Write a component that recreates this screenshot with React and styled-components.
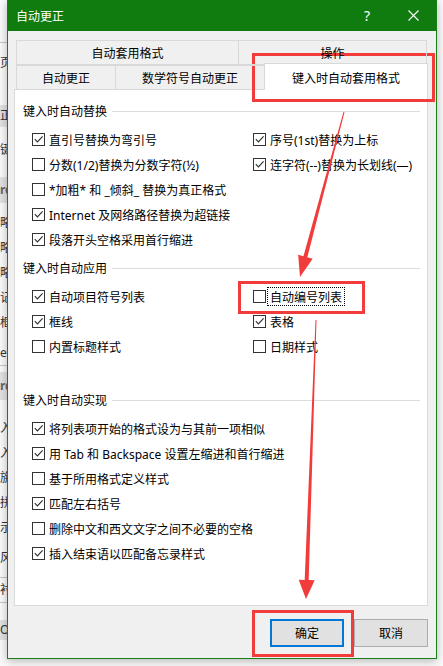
import React from "react";
import styled, { createGlobalStyle } from "styled-components";

const GlobalStyle = createGlobalStyle`
  html, body { margin: 0; padding: 0; }
  body {
    width: 443px; height: 666px; overflow: hidden; background: #fafafa;
    font-family: "Noto Sans", "Noto Sans CJK SC", sans-serif;
  }
  #root { width: 443px; height: 666px; }
`;

const Screen = styled.div`
  position: relative;
  width: 443px;
  height: 666px;
  overflow: hidden;
  background: #fafafa;
`;

const BgColumn = styled.div`
  display: flex;
  flex-direction: column;
  width: 60px;
  font-size: 12px;
  color: #333;
`;

const BgRow = styled.div`
  height: ${(p) => p.$h}px;
  display: flex;
  align-items: center;
  background: ${(p) => (p.$line ? "#c6c6c6" : p.$band ? "#e2e2e2" : "transparent")};
  font-weight: ${(p) => (p.$bold ? 700 : 400)};
  color: ${(p) => (p.$bold ? "#666" : "#333")};
  padding-left: ${(p) => (p.$bold ? 0 : 0)}px;
  white-space: nowrap;
  line-height: 1;
`;

const Dialog = styled.div`
  position: absolute;
  left: 7px;
  top: 0;
  width: 430px;
  height: 659px;
  box-sizing: border-box;
  border: 1px solid #1a7f1a;
  border-top: none;
  background: #f0f0f0;
  display: flex;
  flex-direction: column;
  box-shadow: 0 2px 9px rgba(0, 0, 0, 0.28);
`;

const TitleBar = styled.div`
  height: 31px;
  flex: none;
  background: #107c10;
  color: #fff;
  display: flex;
  align-items: center;
  padding-left: 8px;
  font-size: 12px;
`;

const Title = styled.div`
  flex: 1;
`;

const TitleButton = styled.div`
  width: 46px;
  height: 31px;
  display: flex;
  align-items: center;
  justify-content: center;
  font-size: 14px;
  font-family: "Noto Sans", sans-serif;
`;

const Body = styled.div`
  flex: 1;
  display: flex;
  flex-direction: column;
  padding: 9px 8px 0 6px;
`;

const TabStrip = styled.div`
  display: flex;
  flex-direction: column;
  margin-left: 2px;
  margin-bottom: -1px;
  position: relative;
  z-index: 1;
`;

const TabRow = styled.div`
  display: flex;
  align-items: flex-end;
  height: 25px;
`;

const Tab = styled.div`
  box-sizing: border-box;
  width: ${(p) => p.$w}px;
  height: ${(p) => (p.$selected ? 27 : 25)}px;
  margin-left: ${(p) => (p.$first ? 0 : -1)}px;
  border: 1px solid #d9d9d9;
  border-bottom: ${(p) => (p.$back ? "1px solid #d9d9d9" : "none")};
  background: ${(p) => (p.$selected ? "#fff" : "transparent")};
  display: flex;
  align-items: center;
  justify-content: center;
  font-size: 12px;
  color: #000;
  padding-top: ${(p) => (p.$selected ? 1 : 0)}px;
`;

const Panel = styled.div`
  box-sizing: border-box;
  height: 517px;
  background: #fff;
  border: 1px solid #d9d9d9;
  padding: 11px 7px 0 8px;
  display: flex;
  flex-direction: column;
`;

const Group = styled.div`
  display: flex;
  flex-direction: column;
  margin-bottom: ${(p) => p.$after || 0}px;
`;

const GroupHeader = styled.div`
  height: 20px;
  display: flex;
  align-items: center;
  font-size: 12px;
  color: #000;
  white-space: nowrap;
`;

const HeaderRule = styled.div`
  flex: 1;
  height: 1px;
  background: #dcdcdc;
  margin-left: 5px;
`;

const OptionGrid = styled.div`
  display: grid;
  grid-template-columns: ${(p) => (p.$single ? "1fr" : "221px 1fr")};
  grid-auto-rows: 25px;
  margin: 6px 0 0 9px;
`;

const Option = styled.div`
  grid-column: ${(p) => p.$col || "auto"};
  display: flex;
  align-items: center;
  gap: 1px;
  white-space: nowrap;
`;

const Box = styled.span`
  box-sizing: border-box;
  width: 13px;
  height: 13px;
  flex: none;
  border: 1px solid #333;
  background: #fff;
  display: flex;
`;

const Label = styled.span`
  box-sizing: border-box;
  height: 19px;
  display: flex;
  align-items: center;
  padding: 0 2px;
  border: 1px ${(p) => (p.$focused ? "dotted #000" : "solid transparent")};
  font-size: 12px;
  color: #000;
`;

const ButtonRow = styled.div`
  display: flex;
  justify-content: flex-end;
  gap: 10px;
  margin-top: 13px;
`;

const Button = styled.button`
  box-sizing: border-box;
  width: 74px;
  height: 28px;
  background: #e1e1e1;
  border: ${(p) => (p.$default ? "2px solid #0078d7" : "1px solid #adadad")};
  font-family: "Noto Sans", "Noto Sans CJK SC", sans-serif;
  font-size: 12px;
  color: #000;
  padding: 0;
  margin: 0;
`;

const RedFrame = styled.div`
  position: absolute;
  box-sizing: border-box;
  border: 3px solid #f23b3b;
  pointer-events: none;
`;

const ArrowLayer = styled.svg`
  position: absolute;
  left: 0;
  top: 0;
  pointer-events: none;
`;

function Check({ on }) {
  return (
    <Box>
      {on && (
        <svg width="11" height="11" viewBox="0 0 11 11">
          <path d="M1.8 5.2 L4.4 7.9 L9.6 2.4" fill="none" stroke="#2b2b2b" strokeWidth="1.1" />
        </svg>
      )}
    </Box>
  );
}

function Opt({ on, text, col, focused }) {
  return (
    <Option $col={col}>
      <Check on={on} />
      <Label $focused={focused}>{text}</Label>
    </Option>
  );
}

const bgRows = [
  { h: 42 }, { h: 1, line: true }, { h: 12 }, { h: 15, t: "页" }, { h: 35 },
  { h: 22, band: true, t: "正" }, { h: 16 }, { h: 14, t: "键" }, { h: 20 },
  { h: 26, band: true, t: "rd", bold: true }, { h: 7 },
  { h: 25, t: "略" }, { h: 25, t: "略" }, { h: 25, t: "略" }, { h: 25, t: "记" }, { h: 25, t: "框" },
  { h: 5 }, { h: 25, t: "e y" }, { h: 1, line: true }, { h: 6 },
  { h: 28, band: true, t: "rd", bold: true }, { h: 15 },
  { h: 25, t: "入" }, { h: 25, t: "入" }, { h: 25, t: "旃" }, { h: 25, t: "拼" }, { h: 25, t: "示" },
  { h: 5 }, { h: 25, t: "风" }, { h: 7 }, { h: 1, line: true }, { h: 24, t: "衬" },
  { h: 1, line: true }, { h: 17 }, { h: 20, band: true, t: "O" },
];

export default function App() {
  return (
    <Screen>
      <GlobalStyle />
      <BgColumn>
        {bgRows.map((r, i) => (
          <BgRow key={i} $h={r.h} $line={r.line} $band={r.band} $bold={r.bold}>
            {r.t}
          </BgRow>
        ))}
      </BgColumn>

      <Dialog>
        <TitleBar>
          <Title>自动更正</Title>
          <TitleButton>?</TitleButton>
          <TitleButton>
            <svg width="11" height="11" viewBox="0 0 11 11">
              <path d="M0.5 0.5 L10.5 10.5 M10.5 0.5 L0.5 10.5" stroke="#fff" strokeWidth="1.1" />
            </svg>
          </TitleButton>
        </TitleBar>
        <Body>
          <TabStrip>
            <TabRow>
              <Tab $back $first $w={223}>自动套用格式</Tab>
              <Tab $back $w={189}>操作</Tab>
            </TabRow>
            <TabRow>
              <Tab $first $w={100}>自动更正</Tab>
              <Tab $w={150}>数学符号自动更正</Tab>
              <Tab $selected $w={164}>键入时自动套用格式</Tab>
            </TabRow>
          </TabStrip>
          <Panel>
            <Group $after={6}>
              <GroupHeader>
                键入时自动替换
                <HeaderRule />
              </GroupHeader>
              <OptionGrid>
                <Opt on text="直引号替换为弯引号" />
                <Opt on text="序号(1st)替换为上标" />
                <Opt text="分数(1/2)替换为分数字符(½)" />
                <Opt on text="连字符(--)替换为长划线(—)" />
                <Opt col="1" text="*加粗* 和 _倾斜_ 替换为真正格式" />
                <Opt col="1" on text="Internet 及网络路径替换为超链接" />
                <Opt col="1" on text="段落开头空格采用首行缩进" />
              </OptionGrid>
            </Group>
            <Group $after={31}>
              <GroupHeader>
                键入时自动应用
                <HeaderRule />
              </GroupHeader>
              <OptionGrid>
                <Opt on text="自动项目符号列表" />
                <Opt focused text="自动编号列表" />
                <Opt on text="框线" />
                <Opt on text="表格" />
                <Opt text="内置标题样式" />
                <Opt text="日期样式" />
              </OptionGrid>
            </Group>
            <Group>
              <GroupHeader>
                键入时自动实现
                <HeaderRule />
              </GroupHeader>
              <OptionGrid $single>
                <Opt on text="将列表项开始的格式设为与其前一项相似" />
                <Opt on text="用 Tab 和 Backspace 设置左缩进和首行缩进" />
                <Opt text="基于所用格式定义样式" />
                <Opt on text="匹配左右括号" />
                <Opt text="删除中文和西文文字之间不必要的空格" />
                <Opt on text="插入结束语以匹配备忘录样式" />
              </OptionGrid>
            </Group>
          </Panel>
          <ButtonRow>
            <Button $default>确定</Button>
            <Button>取消</Button>
          </ButtonRow>
        </Body>
      </Dialog>

      <RedFrame style={{ left: 252, top: 53, width: 183, height: 49 }} />
      <RedFrame style={{ left: 238, top: 281, width: 127, height: 33 }} />
      <RedFrame style={{ left: 252, top: 610, width: 102, height: 47 }} />

      <ArrowLayer width="443" height="666" viewBox="0 0 443 666">
        <polygon
          fill="#f23b3b"
          points="344.48,112.13 307.34,257.23 312.66,258.64 300,277 298.17,254.78 303.48,256.19 343.52,111.87"
        />
        <polygon
          fill="#f23b3b"
          points="316.5,320.02 308.68,580.08 314.68,580.3 306,599 298.68,579.72 304.68,579.94 315.5,319.98"
        />
      </ArrowLayer>
    </Screen>
  );
}
